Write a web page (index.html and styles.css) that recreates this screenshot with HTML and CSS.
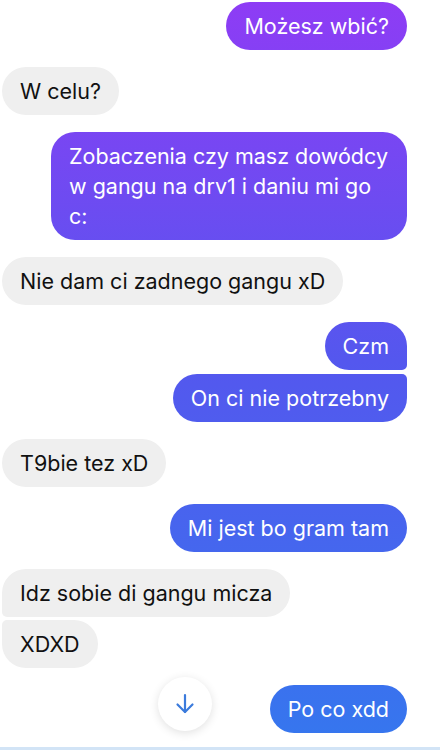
FILE: index.html
```html
<!DOCTYPE html>
<html lang="pl">
<head>
    <meta charset="UTF-8" />
    <meta name="viewport" content="width=device-width, initial-scale=1.0"/>
    <title>Czat</title>
    <link rel="stylesheet" href="styles.css">
</head>
<body>
    <div class="chat">
        <div class="thread">
            <div class="group mine">
                <div class="bubble">Możesz wbić?</div>
            </div>
            <div class="group theirs">
                <div class="bubble">W celu?</div>
            </div>
            <div class="group mine">
                <div class="bubble wide">Zobaczenia czy masz dowódcy<br>w gangu na drv1 i daniu mi go<br>c:</div>
            </div>
            <div class="group theirs">
                <div class="bubble">Nie dam ci zadnego gangu xD</div>
            </div>
            <div class="group mine">
                <div class="bubble">Czm</div>
                <div class="bubble">On ci nie potrzebny</div>
            </div>
            <div class="group theirs">
                <div class="bubble">T9bie tez xD</div>
            </div>
            <div class="group mine">
                <div class="bubble">Mi jest bo gram tam</div>
            </div>
            <div class="group theirs">
                <div class="bubble">Idz sobie di gangu micza</div>
                <div class="bubble">XDXD</div>
            </div>
            <div class="group mine">
                <div class="bubble">Po co xdd</div>
            </div>
        </div>

        <button class="scroll-down" aria-label="Przewiń w dół">
            <svg width="24" height="24" viewBox="0 0 24 24" fill="none" stroke="currentColor" stroke-width="2.2" stroke-linecap="round" stroke-linejoin="round">
                <path d="M12 3v17"/>
                <path d="M4.5 12.5 12 20l7.5-7.5"/>
            </svg>
        </button>

        <div class="composer-edge"></div>
    </div>
</body>
</html>
```

FILE: styles.css
```css
body {
    margin: 0;
    padding: 0;
    font-family: Inter, "Noto Sans", Arial, sans-serif;
    background: #ffffff;
    color: #000;
    overflow: hidden;
}

.chat {
    position: relative;
    height: 100vh;
    display: flex;
    flex-direction: column;
}

.thread {
    display: flex;
    flex-direction: column;
    gap: 17px;
    padding: 2px 33px 0 2px;
}

.group {
    display: flex;
    flex-direction: column;
    gap: 4px;
}

.group.mine {
    align-items: flex-end;
}

.group.theirs {
    align-items: flex-start;
    gap: 3px;
}

.bubble {
    font-size: 21.5px;
    line-height: 30px;
    padding: 9px 18px;
    border-radius: 24px;
    box-sizing: border-box;
    white-space: nowrap;
}

.mine .bubble {
    color: #fff;
    background: linear-gradient(to bottom, #8e3cf5 0%, #5457ee 48%, #3577ee 100%) fixed;
}

.theirs .bubble {
    background: #efefef;
    color: #111;
}

.bubble.wide {
    width: 356px;
}

/* grouped corners */
.mine .bubble:not(:last-child) {
    border-bottom-right-radius: 5px;
}

.mine .bubble:not(:first-child) {
    border-top-right-radius: 5px;
}

.theirs .bubble:not(:last-child) {
    border-bottom-left-radius: 5px;
}

.theirs .bubble:not(:first-child) {
    border-top-left-radius: 5px;
}

.scroll-down {
    position: absolute;
    left: 158px;
    top: 677px;
    width: 54px;
    height: 54px;
    border-radius: 50%;
    border: none;
    background: #fff;
    box-shadow: 0 2px 10px rgba(0, 0, 0, 0.12);
    color: #3b7bdc;
    display: flex;
    align-items: center;
    justify-content: center;
    padding: 0;
}

.composer-edge {
    margin-top: auto;
    height: 3px;
    background: #d2e4f6;
}
```
